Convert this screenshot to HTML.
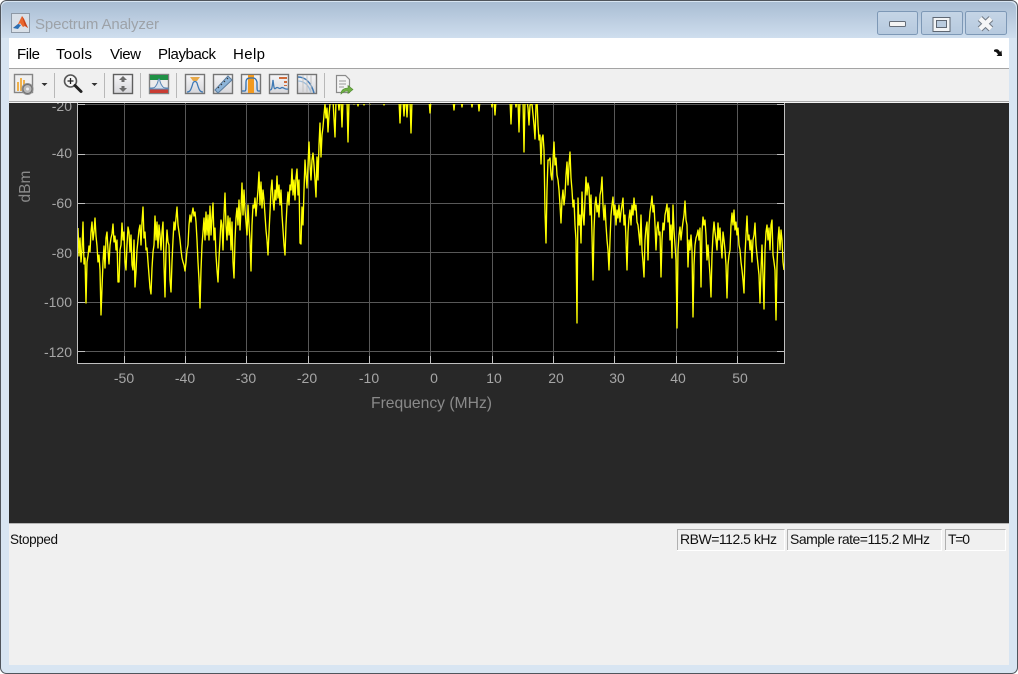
<!DOCTYPE html>
<html><head><meta charset="utf-8"><title>Spectrum Analyzer</title>
<style>
html,body{margin:0;padding:0;background:#fff;width:1018px;height:674px;overflow:hidden}
svg{position:absolute;left:0;top:0;display:block}
text{font-family:"Liberation Sans",Arial,sans-serif}
</style></head><body>
<svg width="1018" height="674" viewBox="0 0 1018 674" xmlns="http://www.w3.org/2000/svg">
<defs>
<linearGradient id="tb" x1="0" y1="0" x2="0" y2="1"><stop offset="0" stop-color="#a9bdd3"/><stop offset="1" stop-color="#cfdeee"/></linearGradient>
<linearGradient id="wb" x1="0" y1="0" x2="0" y2="1"><stop offset="0" stop-color="#c5d5e6"/><stop offset="1" stop-color="#b6c9de"/></linearGradient>
<linearGradient id="ib" x1="0" y1="0" x2="0" y2="1"><stop offset="0" stop-color="#f6f6f8"/><stop offset="1" stop-color="#d6d6da"/></linearGradient>
<clipPath id="plot"><rect x="78" y="104" width="706" height="259"/></clipPath>
</defs>
<!-- frame -->
<rect x="0.5" y="0.5" width="1017" height="673" rx="6" fill="#d8e5f2" stroke="#50555c"/>
<path d="M1.5 38V8a6 6 0 0 1 6-6H1010a6 6 0 0 1 6 6V38Z" fill="url(#tb)"/>
<!-- client -->
<rect x="9" y="38" width="1000" height="30" fill="#fff"/>
<rect x="9" y="68" width="1000" height="1" fill="#a4a4a4"/>
<rect x="9" y="69" width="1000" height="34" fill="#f0f0f0"/>
<rect x="9" y="103" width="1000" height="420" fill="#282828"/>
<rect x="9" y="523" width="1000" height="1" fill="#b4b4b4"/>
<rect x="9" y="524" width="1000" height="141" fill="#f0f0f0"/>

<!-- tick labels -->
<g font-size="14" fill="#a6a6a6" text-anchor="end">
<text x="72" y="111">-20</text><text x="72" y="158">-40</text><text x="72" y="208">-60</text><text x="72" y="258">-80</text><text x="72" y="307">-100</text><text x="72" y="357">-120</text>
</g>
<g font-size="14" fill="#a6a6a6" text-anchor="middle">
<text x="124" y="383">-50</text><text x="185" y="383">-40</text><text x="246" y="383">-30</text><text x="307" y="383">-20</text><text x="369" y="383">-10</text><text x="434" y="383">0</text><text x="494" y="383">10</text><text x="556" y="383">20</text><text x="617" y="383">30</text><text x="678" y="383">40</text><text x="740" y="383">50</text>
</g>
<text x="371" y="408" font-size="15.7" fill="#8a8a8a" textLength="121">Frequency (MHz)</text>
<text transform="translate(30,186.500) rotate(-90)" font-size="15.5" fill="#8a8a8a" text-anchor="middle">dBm</text>

<!-- plot -->
<rect x="77" y="103" width="708" height="261" fill="#000"/>
<g stroke="#585858" stroke-width="1" shape-rendering="crispEdges">
<path d="M124.500 103V363M185.500 103V363M246.500 103V363M308.500 103V363M369.500 103V363M430.500 103V363M492.500 103V363M553.500 103V363M614.500 103V363M676.500 103V363M737.500 103V363"/>
<path d="M78 104.500H784M78 154.500H784M78 203.500H784M78 252.500H784M78 302.500H784M78 351.500H784"/>
</g>
<g stroke="#c0c0c0" stroke-width="1" shape-rendering="crispEdges" fill="none">
<path d="M77.500 103V363.500H784.500V103"/>
<path d="M78 104.500h7M78 154.500h7M78 203.500h7M78 252.500h7M78 302.500h7M78 351.500h7M777 104.500h7M777 154.500h7M777 203.500h7M777 252.500h7M777 302.500h7M777 351.500h7"/>
<path d="M124.500 363v-7M185.500 363v-7M246.500 363v-7M308.500 363v-7M369.500 363v-7M430.500 363v-7M492.500 363v-7M553.500 363v-7M614.500 363v-7M676.500 363v-7M737.500 363v-7"/>
</g>
<polyline clip-path="url(#plot)" fill="none" stroke="#ffff00" stroke-width="1.35" stroke-linejoin="round" points="78,228 79,256 80,238 81,262 82,250 83,222 84,264 85,258 86,303 87,262 88,256 89,246 90,252 91,232 92,222 93,240 94,232 95,218 96,236 97,246 98,262 99,255 100,270 101,315 102,288 103,262 104,246 105,268 106,238 107,232 108,250 109,264 110,245 111,238 112,234 113,224 114,242 115,236 116,250 117,240 118,282 119,282 120,250 121,245 122,223 123,240 124,232 125,262 126,270 127,245 128,227 129,232 130,252 131,235 132,265 133,270 134,240 135,287 136,272 137,250 138,240 139,230 140,225 141,245 142,222 143,207 144,238 145,232 146,250 147,248 148,262 149,275 150,288 151,294 152,268 153,252 154,245 155,216 156,240 157,222 158,248 159,225 160,235 161,250 162,232 163,222 164,265 165,297 166,250 167,230 168,242 169,245 170,280 171,292 172,262 173,240 174,222 175,230 176,218 177,207 178,225 179,232 180,240 181,250 182,258 183,262 184,265 185,271 186,262 187,250 188,245 189,225 190,215 191,222 192,214 193,208 194,216 195,212 196,222 197,240 198,262 199,280 200,308 201,270 202,245 203,232 204,218 205,240 206,212 207,235 208,215 209,240 210,206 211,235 212,218 213,203 214,240 215,228 216,255 217,270 218,282 219,258 220,240 221,220 222,225 223,250 224,215 225,193 226,225 227,240 228,216 229,235 230,218 231,250 232,222 233,262 234,278 235,240 236,218 237,208 238,225 239,200 240,230 241,210 242,183 243,215 244,190 245,210 246,222 247,235 248,205 249,225 250,240 251,271 252,225 253,205 254,208 255,198 256,216 257,202 258,190 259,172 260,205 261,182 262,208 263,190 264,200 265,215 266,230 267,240 268,255 269,232 270,212 271,190 272,180 273,200 274,210 275,190 276,200 277,176 278,198 279,185 280,205 281,190 282,215 283,230 284,245 285,255 286,225 287,205 288,192 289,205 290,185 291,190 292,169 293,195 294,180 295,200 296,178 297,169 298,195 299,180 300,243 301,244 302,207 303,225 304,190 305,160 306,175 307,188 308,165 309,142 310,165 311,180 312,160 313,153 314,165 315,180 316,197 317,157 318,180 319,145 320,123 321,157 322,135 323,127 324,115 325,104 326,118 327,108 328,132 329,115 330,104 331,100 333,100 335,137 336,100 338,100 339,110 340,100 341,100 342,127 343,100 347,100 348,142 349,100 353,100 354,104 355,100 357,100 358,106 359,100 363,100 364,105 365,100 369,100 370,104 371,100 383,100 384,105 385,100 399,100 400,123 401,100 403,100 404,116 405,100 406,100 407,117 408,100 410,100 411,133 412,100 429,100 430,113 431,100 453,100 454,110 455,100 461,100 462,107 463,100 471,100 472,107 473,100 478,100 479,111 480,100 491,100 492,107 493,100 494,100 495,115 496,100 510,100 511,124 512,100 515,100 516,107 517,100 518,100 519,132 520,100 523,100 524,152 525,100 527,100 528,108 529,125 530,105 532,104 534,125 535,139 536,105 537,100 538,125 539,140 540,135 541,164 542,138 543,135 544,150 545,212 546,243 547,190 548,160 549,160 550,158 551,175 552,180 553,160 554,142 555,165 556,158 557,175 558,180 559,190 560,205 561,223 562,200 563,190 564,205 565,195 566,175 567,162 568,185 569,165 570,152 571,178 572,190 573,207 574,200 575,225 576,240 577,323 578,198 579,225 580,215 581,243 582,192 583,215 584,225 585,200 586,177 587,195 588,183 589,188 590,215 591,195 592,235 593,280 594,230 595,205 596,197 597,212 598,205 599,217 600,195 601,190 602,177 603,205 604,220 605,205 606,225 607,240 608,250 609,270 610,240 611,215 612,205 613,197 614,215 615,205 616,225 617,210 618,218 619,205 620,222 621,212 622,205 623,198 624,225 625,215 626,240 627,270 628,232 629,218 630,210 631,225 632,205 633,215 634,198 635,210 636,205 637,222 638,225 639,235 640,245 641,215 642,250 643,262 644,277 645,240 646,228 647,222 648,260 649,225 650,212 651,205 652,196 653,212 654,205 655,225 656,250 657,228 658,222 659,235 660,232 661,277 662,240 663,223 664,230 665,215 666,210 667,204 668,222 669,208 670,240 671,225 672,258 673,205 674,230 675,245 676,260 677,328 678,250 679,235 680,227 681,240 682,230 683,222 684,215 685,201 686,220 687,225 688,267 689,240 690,250 691,235 692,250 693,317 694,265 695,245 696,238 697,235 698,230 699,240 700,228 701,287 702,232 703,217 704,225 705,220 706,235 707,260 708,245 709,260 710,275 711,297 712,255 713,235 714,222 715,232 716,240 717,250 718,223 719,240 720,228 721,245 722,258 723,232 724,240 725,250 726,265 727,298 728,265 729,255 730,250 731,225 732,213 733,225 734,210 735,230 736,222 737,235 738,228 739,245 740,250 741,262 742,270 743,280 744,293 745,255 746,235 747,216 748,240 749,235 750,250 751,240 752,262 753,240 754,235 755,223 756,245 757,255 758,265 759,275 760,303 761,270 762,245 763,275 764,309 765,250 766,232 767,225 768,240 769,228 770,250 771,225 772,220 773,255 774,262 775,270 776,320 777,265 778,240 779,227 780,250 781,230 782,240 783,262 784,270"/>

<!-- toolbar cover + bottom edge -->
<rect x="9" y="69" width="1000" height="33" fill="#f0f0f0"/>
<rect x="9" y="101" width="1000" height="1" fill="#a8a8a8"/>
<rect x="9" y="102" width="1000" height="1" fill="#f4f4f4"/>

<!-- title bar -->
<rect x="11.500" y="13.500" width="18" height="19" fill="#d9e0e8" stroke="#8e99a6"/>
<path d="M13 28l5-4 4-8 2 3 4 9-3-2-2 1-3-4-3 4z" fill="#e9662c"/>
<path d="M13 28l5-4 3 1-3 4z" fill="#2a6fb5"/>
<path d="M22 16l2 3 4 9-3-2z" fill="#c9431a"/>
<text x="35" y="29" font-size="15" fill="#9da2a8" textLength="124">Spectrum Analyzer</text>

<!-- window buttons -->
<g stroke="#7d98b6" fill="url(#wb)">
<rect x="877.500" y="11.500" width="40" height="23" rx="2"/>
<rect x="921.500" y="11.500" width="41" height="23" rx="2"/>
<rect x="965.500" y="11.500" width="41" height="23" rx="2"/>
</g>
<rect x="889.500" y="21.500" width="16" height="5" rx="1" fill="#f4f4f4" stroke="#656d78"/>
<rect x="934.500" y="18.500" width="14" height="11" fill="none" stroke="#f2f4f6" stroke-width="3"/>
<rect x="933" y="17.500" width="17" height="14" fill="none" stroke="#5e6773"/>
<rect x="936.500" y="20.500" width="10" height="7" fill="#b9cbde" stroke="#5e6773"/>
<path d="M980 18.500l11 10.500M991 18.500l-11 10.500" fill="none" stroke="#717a85" stroke-width="6.500"/>
<path d="M980 18.500l11 10.500M991 18.500l-11 10.500" fill="none" stroke="#f5f6f7" stroke-width="4.500"/>

<!-- menu -->
<g font-size="15" fill="#000">
<text x="17" y="59" textLength="23">File</text>
<text x="56" y="59" textLength="36">Tools</text>
<text x="110" y="59" textLength="31">View</text>
<text x="158" y="59" textLength="58">Playback</text>
<text x="233" y="59" textLength="32">Help</text>
</g>
<path d="M994 50c3-1.500 5-.5 6 2l1.500-1.500.5 5.500h-5.500l1.500-1.500c-1-2-2.500-3-4-3z" fill="#111"/>

<!-- toolbar separators -->
<path d="M54.500 73v25M104.500 73v25M140.500 73v25M176.500 73v25M324.500 73v25" stroke="#b8b8b8" shape-rendering="crispEdges"/>
<path d="M41.500 83h6l-3 3zM91.500 83h6l-3 3z" fill="#333"/>

<!-- icon 1 -->
<rect x="14.500" y="74.500" width="18" height="18" fill="#f0f0f0" stroke="#858585" stroke-width="1.400"/>
<path d="M17 91V82h2v9zM20 91V78h2v13zM23 91V80h2v11zM26 91V84h2v7z" fill="#efb14c"/>
<circle cx="27.500" cy="89" r="6" fill="#8f8f8f"/><circle cx="27.500" cy="89" r="4.500" fill="#b8b8b8" stroke="#6f6f6f"/><circle cx="27.500" cy="89" r="1.500" fill="#eee"/>
<!-- zoom -->
<circle cx="70.500" cy="81" r="6" fill="#f6f6f6" stroke="#555" stroke-width="1.600"/>
<path d="M67.500 81h6M70.500 78v6" stroke="#222" stroke-width="1.300"/>
<path d="M75 85.500l6 6" stroke="#222" stroke-width="3" stroke-linecap="round"/>
<!-- scale -->
<rect x="113.500" y="74.500" width="19" height="19" fill="url(#ib)" stroke="#5f5f5f" stroke-width="1.400"/>
<path d="M123 76l4 4h-2.500v2h-3v-2H119zM123 92l4-4h-2.500v-2h-3v2H119z" fill="#6b6b6b"/>
<!-- color icon -->
<rect x="149.500" y="74.500" width="19" height="19" fill="#ececec" stroke="#808080" stroke-width="1.400"/>
<rect x="150" y="75" width="18" height="5" fill="#1f9145"/>
<rect x="150" y="89" width="18" height="4" fill="#c93c33"/>
<path d="M150 88c5 0 5-.5 7-4 1.500-3 1-5 2-5s.5 2 2 5c2 3.500 2 4 7 4v1h-18z" fill="#d8e2ee" stroke="#5b87b5"/>
<!-- measurement icons -->
<g fill="url(#ib)" stroke="#757575" stroke-width="1.400">
<rect x="185.500" y="74.500" width="19" height="19"/>
<rect x="213.500" y="74.500" width="19" height="19"/>
<rect x="241.500" y="74.500" width="19" height="19"/>
<rect x="269.500" y="74.500" width="19" height="19"/>
<rect x="297.500" y="74.500" width="19" height="19"/>
</g>
<path d="M190 77h10l-3 4h-4z" fill="#e7a94a"/>
<path d="M187 92c3 0 4-2 6-9 1-2 3-2 4 0 2 7 3 9 6 9" fill="none" stroke="#3f79b4" stroke-width="1.300"/>
<path d="M215 90l13-14 4 4-14 13z" fill="#8db4d8" stroke="#5c7d9e"/>
<path d="M219 88l-1-1M222 85l-1-1M225 82l-1-1M228 79l-1-1" stroke="#333"/>
<rect x="248" y="75" width="6" height="18" fill="#f29a1f"/>
<path d="M242 91h3c1 0 1-2 1-9 0-4 3-4 4-4h3c1 0 3 0 4 4 0 7 0 9 1 9h2" fill="none" stroke="#2f6fb0" stroke-width="1.300"/>
<path d="M270 90c2 0 2-2 3-10 1 8 1 10 3 8s3 2 5 0 3 2 7 1" fill="none" stroke="#3f79b4" stroke-width="1.300"/>
<path d="M279 77h8v2h-8zM284 81h3v2h-3zM284 85h3v1h-3z" fill="#cf6b3a"/>
<path d="M298 77c7 0 13 5 16 16" fill="none" stroke="#3f79b4" stroke-width="1.500"/>
<path d="M298 81c6 0 11 4 13 12" fill="none" stroke="#9fbedb" stroke-width="1.300"/>
<path d="M303 75v18M307 75v18M311 75v18" stroke="#c2c2c2"/>
<!-- doc -->
<path d="M336.500 75.500h9l4 4v13h-13z" fill="#f4f4f4" stroke="#8a8a8a" stroke-width="1.200"/>
<path d="M339 81h7M339 84h7M339 87h5" stroke="#9a9a9a"/>
<path d="M341 94c0-4 3-6 7-6v-2.500l5 4-5 4V91c-3 0-5 1-7 3z" fill="#6fae45" stroke="#4f8a30" stroke-width=".6"/>

<!-- status -->
<text x="10" y="544" font-size="13.500" fill="#101010" textLength="48">Stopped</text>
<g fill="none" shape-rendering="crispEdges">
<path d="M677.500 550V529.500H784.500" stroke="#b0b0b0"/><path d="M677 550.500H784.500V530" stroke="#fff"/>
<path d="M787.500 550V529.500H941.500" stroke="#b0b0b0"/><path d="M787 550.500H941.500V530" stroke="#fff"/>
<path d="M945.500 550V529.500H1005.500" stroke="#b0b0b0"/><path d="M945 550.500H1005.500V530" stroke="#fff"/>
</g>
<g font-size="14" fill="#101010">
<text x="680" y="544" textLength="97">RBW=112.5 kHz</text>
<text x="790" y="544" textLength="140">Sample rate=115.2 MHz</text>
<text x="948" y="544" textLength="22">T=0</text>
</g>
</svg>
</body></html>
